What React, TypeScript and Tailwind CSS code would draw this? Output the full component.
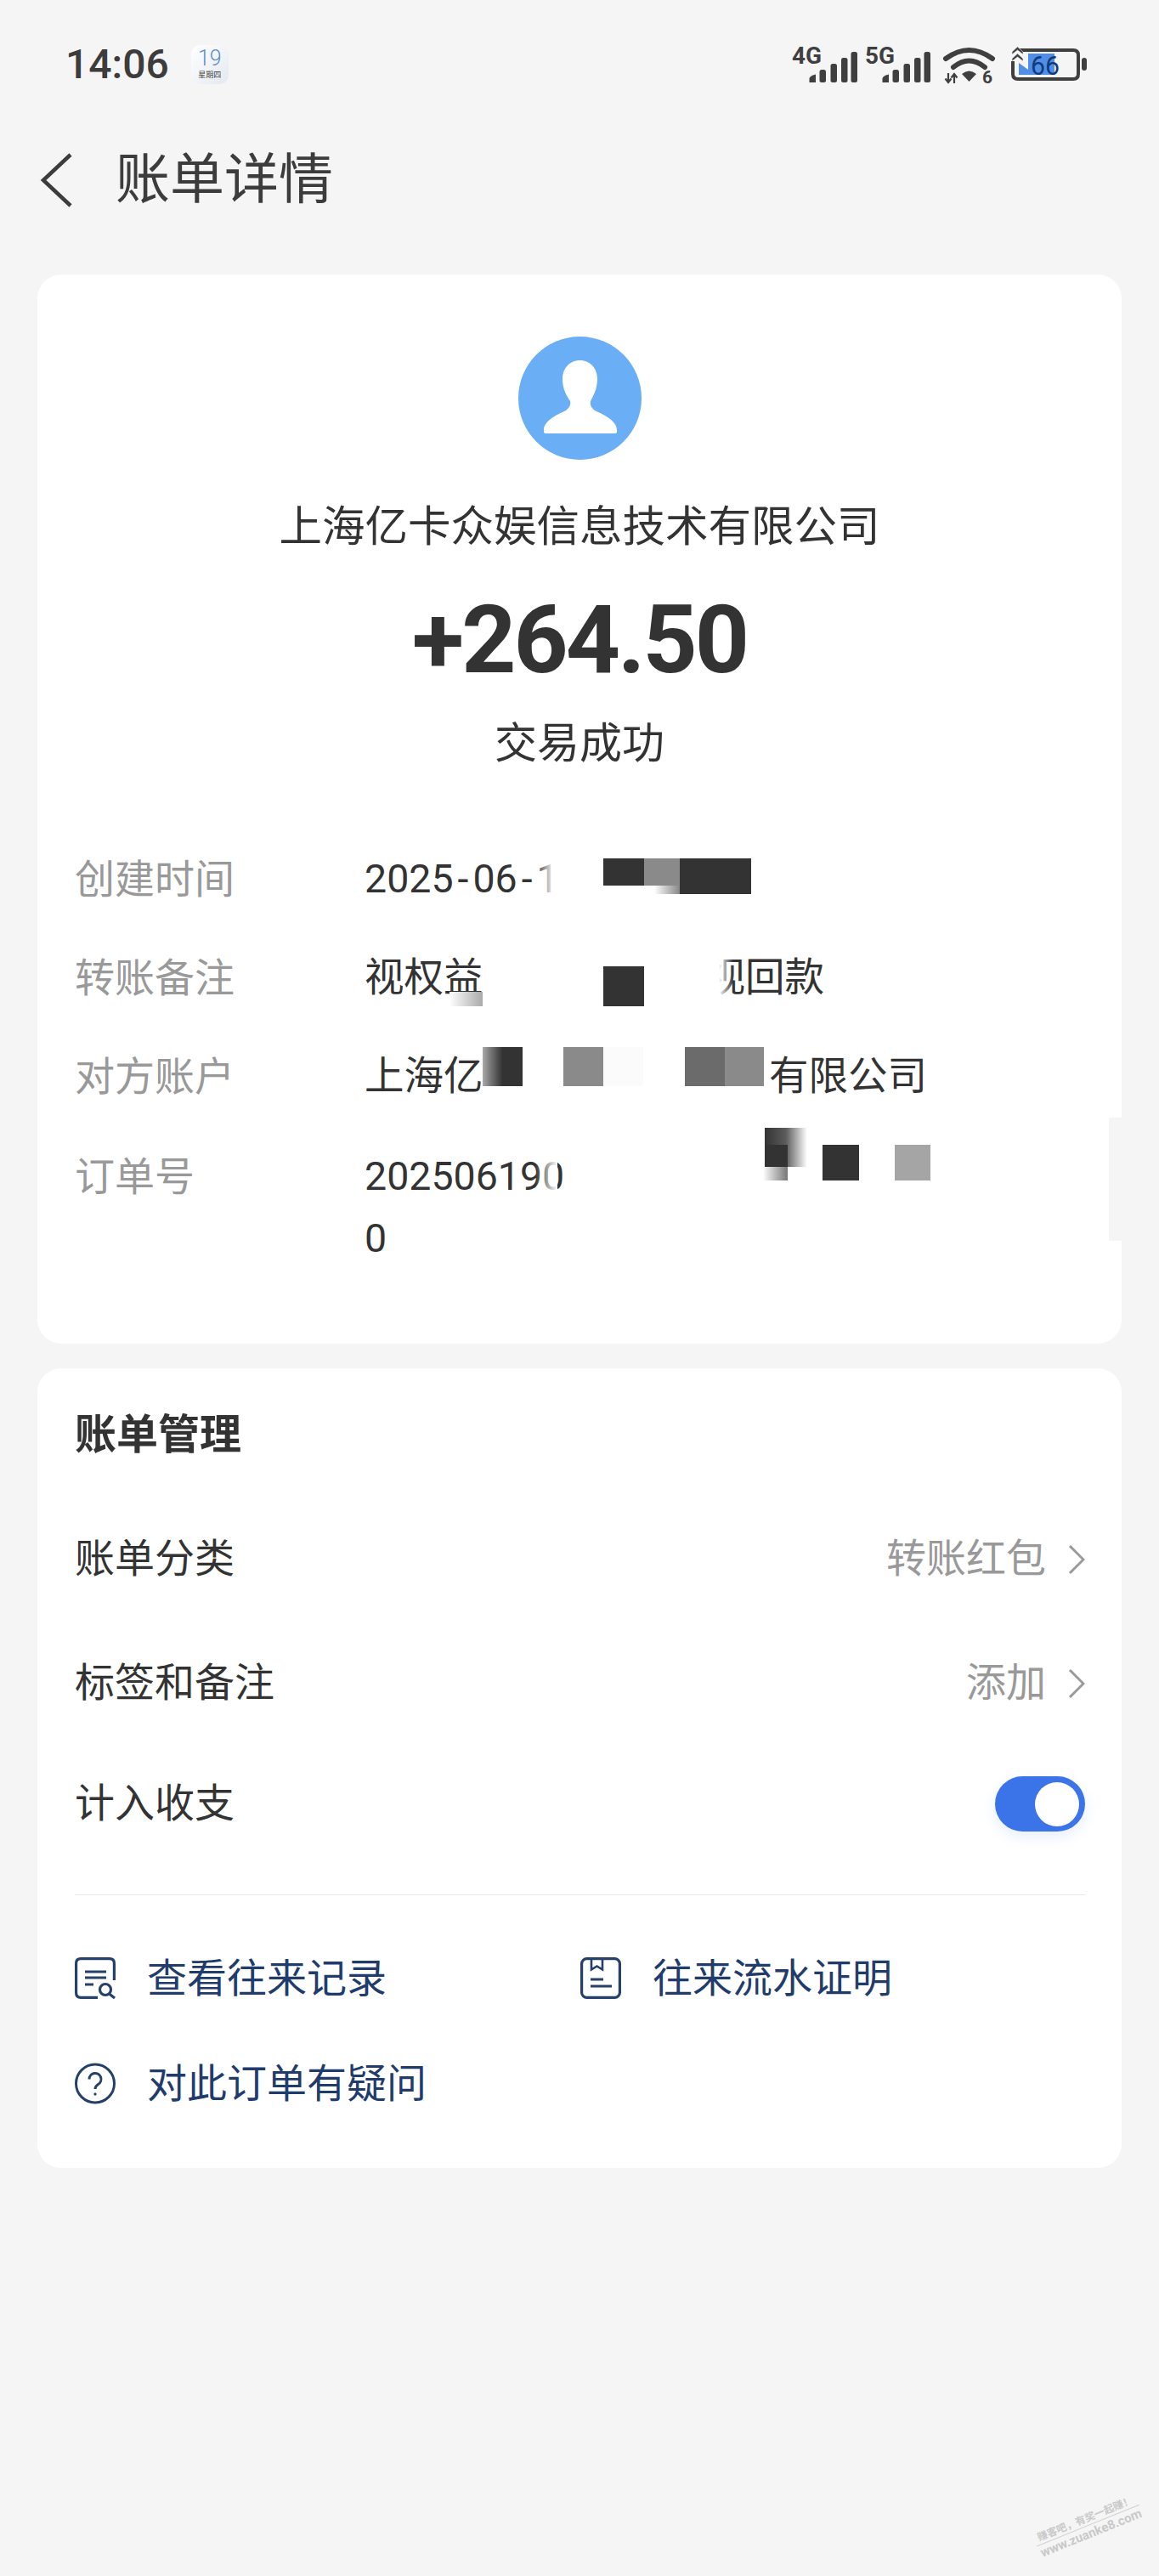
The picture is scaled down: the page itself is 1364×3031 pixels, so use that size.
import React from 'react'

const detailRows: { label: string; value: React.ReactNode; extra?: string }[] = [
  {
    label: '创建时间',
    value: (
      <>
        2025<span className="mx-[5px]">-</span>06<span className="mx-[5px]">-</span>1
      </>
    ),
  },
  {
    label: '转账备注',
    value: (
      <>
        视权益<span className="inline-block w-[262px]" />视回款
      </>
    ),
  },
  {
    label: '对方账户',
    value: (
      <>
        上海亿卡<span className="inline-block w-[290px]" />有限公司
      </>
    ),
  },
  {
    label: '订单号',
    extra: 'mt-[2px]',
    value: (
      <>
        202506190
        <br />0
      </>
    ),
  },
]

function Signal({ label }: { label: string }) {
  return (
    <svg width="77" height="44" viewBox="0 0 77 44" fill="#3f3f3f" className="overflow-visible">
      <text x="0" y="21" fontFamily="Roboto" fontWeight="700" fontSize="27" textLength="35" lengthAdjust="spacingAndGlyphs">
        {label}
      </text>
      <path d="M20.5 43V38.5Q20.5 35.5 28 33.5V43Z" />
      <rect x="32.5" y="28" width="7.5" height="15" rx="2.5" />
      <rect x="45.5" y="21" width="7.5" height="22" rx="2.5" />
      <rect x="58" y="14" width="7.5" height="29" rx="2.5" />
      <rect x="69.5" y="7" width="7.5" height="36" rx="2.5" />
    </svg>
  )
}

function Wifi() {
  return (
    <svg width="61" height="44" viewBox="0 0 61 44" fill="none" className="overflow-visible">
      <path d="M3 15Q30.5 -5 58 15" stroke="#3f3f3f" strokeWidth="6" strokeLinecap="round" />
      <path d="M12 25Q30.5 10 49 25" stroke="#3f3f3f" strokeWidth="6" strokeLinecap="round" />
      <path d="M22 33Q30.5 26 39 33L30.5 42Z" fill="#3f3f3f" />
      <path d="M6 32V43M2.5 38.5L6 43L9.5 38.5M13 44V33M9.5 37.5L13 33L16.5 37.5" stroke="#3f3f3f" strokeWidth="2.2" />
      <text x="46" y="44" fontFamily="Roboto" fontWeight="700" fontSize="21" fill="#3f3f3f">
        6
      </text>
    </svg>
  )
}

function Battery() {
  return (
    <svg width="89" height="48" viewBox="0 0 89 48" fill="none">
      <path d="M10 7H73Q79 7 79 13V35Q79 41 73 41H8Q2 41 2 35V20" stroke="#3f3f3f" strokeWidth="4" />
      <path d="M9 36V22L20 30V11H51V36Z" fill="#4f8fe8" />
      <rect x="83" y="16" width="6" height="15" rx="3" fill="#3f3f3f" />
      <path d="M1 9L7.5 3L14 9V12L7.5 7L1 12ZM1 17L7.5 11L14 17V20L7.5 15L1 20Z" fill="#3f3f3f" stroke="#f5f5f5" strokeWidth="0.6" />
      <text x="23" y="36" fontFamily="Roboto" fontSize="31" textLength="34" lengthAdjust="spacingAndGlyphs" fill="#123a7a">
        66
      </text>
    </svg>
  )
}

function Chevron() {
  return (
    <svg width="20" height="36" viewBox="0 0 20 36" fill="none" className="ml-[26px]">
      <path d="M2 2L18 18L2 34" stroke="#9a9a9a" strokeWidth="3" />
    </svg>
  )
}

function RecordIcon() {
  return (
    <svg width="48" height="49" viewBox="0 0 48 49" fill="none" stroke="#25406b" strokeWidth="3.2">
      <path d="M27 47.4H7Q1.6 47.4 1.6 42V7Q1.6 1.6 7 1.6H41Q46.4 1.6 46.4 7V27" />
      <path d="M12 17H37M12 24H37M12 32H22" />
      <circle cx="36" cy="38" r="6.5" />
      <path d="M40.5 43L47 48" />
    </svg>
  )
}

function ProofIcon() {
  return (
    <svg width="48" height="49" viewBox="0 0 48 49" fill="none" stroke="#25406b" strokeWidth="3.2">
      <rect x="1.6" y="1.6" width="44.8" height="45.8" rx="6" />
      <path d="M13 2V14.5L19.5 10.5L26 14.5V2" strokeWidth="2.6" />
      <path d="M12 26H27M12 34H37" />
    </svg>
  )
}

function QuestionIcon() {
  return (
    <svg width="48" height="49" viewBox="0 0 48 49" fill="none" stroke="#25406b" strokeWidth="3">
      <circle cx="24" cy="24.5" r="22.5" />
      <path d="M17 19.5A7 7 0 1 1 27.5 25.5C25 27 24 28 24 31" />
      <circle cx="24" cy="37" r="1.2" fill="#25406b" strokeWidth="1" />
    </svg>
  )
}

export default function App() {
  return (
    <div className="relative h-[3031px] w-full overflow-hidden bg-[#f5f5f5] font-['Roboto','Noto_Sans_CJK_SC',sans-serif] text-[#333]">
      <div className="flex h-[152px] items-center pl-[77px] pr-[85px]">
        <span className="text-[48px] font-medium leading-none text-[#3c3c3c]">14:06</span>
        <div className="ml-[26px] flex h-[46px] w-[44px] flex-col items-center rounded-[11px] bg-linear-to-br from-white to-[#e4e9f0]">
          <span className="mt-[3px] text-[25px] font-light leading-[26px] text-[#5b8ec9]">19</span>
          <span className="mt-[1px] text-[9px] leading-[10px] text-[#444]">星期四</span>
        </div>
        <div className="ml-auto flex items-center">
          <Signal label="4G" />
          <div className="ml-[9px]">
            <Signal label="5G" />
          </div>
          <div className="ml-[15px]">
            <Wifi />
          </div>
          <div className="ml-[19px]">
            <Battery />
          </div>
        </div>
      </div>

      <div className="flex h-[120px] items-center pl-[46px]">
        <svg width="40" height="64" viewBox="0 0 40 64" fill="none">
          <path d="M37 2L5 32L37 62" stroke="#3c3c3c" strokeWidth="4.5" />
        </svg>
        <h1 className="ml-[50px] text-[64px] font-normal leading-none text-[#3c3c3c]">账单详情</h1>
      </div>

      <main className="px-[44px] pt-[51px]">
        <section className="h-[1258px] rounded-[28px] bg-white pt-[73px]">
          <div className="flex flex-col items-center">
            <div className="h-[145px] w-[145px] rounded-full bg-[#6aaef5]">
              <svg width="145" height="145" viewBox="0 0 145 145" fill="#fff">
                <path d="M72.5 28C60 28 52 38 52 50C52 62 57 70 61 76C62 80 60 84 56 87C48 91 30 98 30 110V112Q30 114 33 114H113Q116 114 116 112V110C116 98 98 91 90 87C86 84 84 80 85 76C88 70 93 62 93 50C93 38 85 28 72.5 28Z" />
              </svg>
            </div>
            <div className="mt-[49px] h-[60px] text-[50.5px] leading-[60px]">上海亿卡众娱信息技术有限公司</div>
            <div className="mt-[38px] h-[130px] text-[112px] font-bold leading-[130px] tracking-[-3px]">+264.50</div>
            <div className="mt-[27px] h-[60px] text-[50px] leading-[60px]">交易成功</div>
          </div>

          <div className="relative mt-[93px] flex flex-col gap-[43px] pl-[44px]">
            {detailRows.map((row) => (
              <div key={row.label} className={`flex text-[46.5px] leading-[73px] ${row.extra ?? ''}`}>
                <div className="w-[341px] text-[47px] text-[#999]">{row.label}</div>
                <div>{row.value}</div>
              </div>
            ))}

            {/* 打码色块 */}
            <div className="absolute left-[586px] top-0 h-[74px] w-[22px] bg-linear-to-r from-transparent to-white" />
            <div className="absolute left-[608px] top-0 h-[74px] w-[58px] bg-white" />
            <div className="absolute left-[666px] top-[12px] h-[32px] w-[48px] bg-[#333]" />
            <div className="absolute left-[714px] top-[12px] h-[32px] w-[42px] bg-[#8a8a8a]" />
            <div className="absolute left-[726px] top-[44px] h-[10px] w-[30px] bg-linear-to-r from-white to-[#888]" />
            <div className="absolute left-[756px] top-[12px] h-[42px] w-[84px] bg-[#333]" />

            <div className="absolute left-[485px] top-[169px] h-[17px] w-[39px] bg-linear-to-r from-white to-[#aaa]" />
            <div className="absolute left-[666px] top-[139px] h-[47px] w-[48px] bg-[#333]" />
            <div className="absolute left-[785px] top-[116px] h-[74px] w-[34px] bg-linear-to-r from-white via-white to-transparent" />

            <div className="absolute left-[524px] top-[234px] h-[46px] w-[47px] bg-linear-to-r from-[#aaa] via-[#333] to-[#333]" />
            <div className="absolute left-[540px] top-[280px] h-[20px] w-[31px] bg-white" />
            <div className="absolute left-[619px] top-[234px] h-[46px] w-[47px] bg-[#8a8a8a]" />
            <div className="absolute left-[666px] top-[234px] h-[46px] w-[47px] bg-[#fbfbfb]" />
            <div className="absolute left-[762px] top-[234px] h-[46px] w-[47px] bg-[#6b6b6b]" />
            <div className="absolute left-[809px] top-[234px] h-[46px] w-[46px] bg-[#8a8a8a]" />

            <div className="absolute left-[586px] top-[350px] h-[74px] w-[26px] bg-linear-to-r from-transparent to-white" />
            <div className="absolute left-[856px] top-[329px] h-[46px] w-[50px] bg-linear-to-r from-[#333] via-[#333]/80 to-transparent" />
            <div className="absolute left-[856px] top-[349px] h-[26px] w-[27px] bg-[#333]" />
            <div className="absolute left-[854px] top-[375px] h-[16px] w-[29px] bg-linear-to-r from-white to-[#777]" />
            <div className="absolute left-[924px] top-[349px] h-[42px] w-[43px] bg-[#333]" />
            <div className="absolute left-[1009px] top-[349px] h-[42px] w-[42px] bg-[#a5a5a5]" />
            <div className="absolute left-[1261px] top-[317px] h-[145px] w-[15px] bg-[#f5f5f5]" />
          </div>
        </section>

        <section className="mt-[29px] h-[941px] rounded-[28px] bg-white pl-[44px] pr-[43px] pt-[49px]">
          <h2 className="h-[60px] text-[49px] font-bold leading-[60px]">账单管理</h2>
          <div className="mt-[43px] flex h-[145px] items-center text-[47px]">
            <span>账单分类</span>
            <span className="ml-auto text-[#999]">转账红包</span>
            <Chevron />
          </div>
          <div className="flex h-[147px] items-center text-[47px]">
            <span>标签和备注</span>
            <span className="ml-auto text-[#999]">添加</span>
            <Chevron />
          </div>
          <div className="flex h-[137px] items-center text-[47px]">
            <span>计入收支</span>
            <div className="ml-auto flex h-[65px] w-[106px] items-center rounded-full bg-[#3b73e8] pl-[47px] shadow-[0_6px_16px_rgba(59,115,232,0.12)]">
              <div className="h-[52px] w-[52px] rounded-full bg-white" />
            </div>
          </div>
          <div className="mt-[38px] h-[1px] bg-[#e8e8e8]" />
          <div className="mt-[35px] grid grid-cols-[595px_1fr] text-[47px] text-[#1f3c6c]">
            <div className="flex h-[124px] items-center gap-[37px]">
              <RecordIcon />
              <span className="pt-[2px]">查看往来记录</span>
            </div>
            <div className="flex h-[124px] items-center gap-[37px]">
              <ProofIcon />
              <span className="pt-[2px]">往来流水证明</span>
            </div>
            <div className="flex h-[124px] items-center gap-[37px]">
              <QuestionIcon />
              <span className="pt-[2px]">对此订单有疑问</span>
            </div>
          </div>
        </section>
      </main>

      {/* 水印 */}
      <div className="absolute left-[1216px] top-[2956px] w-[130px] -rotate-[22deg] text-center text-[#c9c9c9]">
        <div className="whitespace-nowrap text-[12px] font-bold leading-[15px]">赚客吧，有奖一起赚！</div>
        <div className="h-[1px] bg-[#d0d0d0]" />
        <div className="whitespace-nowrap text-[15px] font-bold leading-[18px]">www.zuanke8.com</div>
      </div>
    </div>
  )
}
